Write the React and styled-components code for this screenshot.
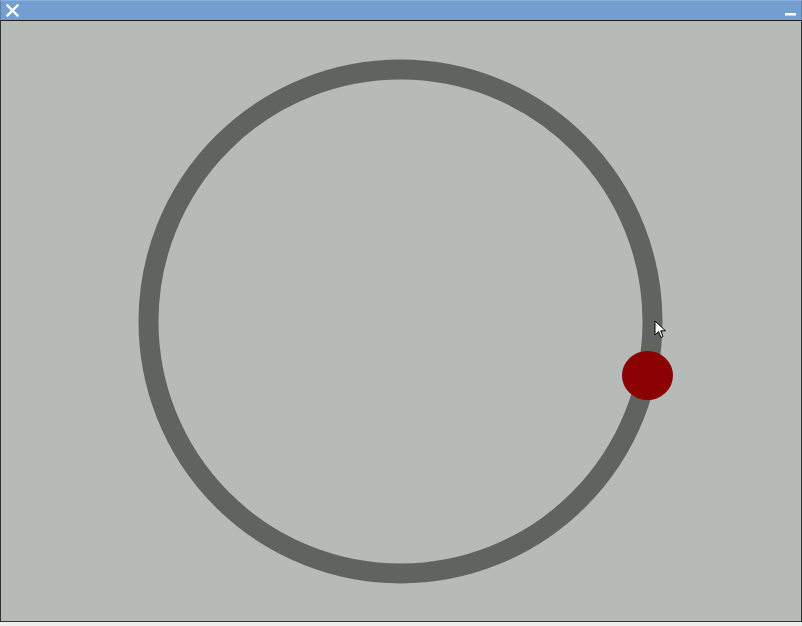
import React from "react";
import styled, { createGlobalStyle } from "styled-components";

const Global = createGlobalStyle`
  html, body { margin: 0; padding: 0; background: #eeeeec; overflow: hidden; }
  body { font-family: "DejaVu Sans", sans-serif; }
`;

const Window = styled.div`
  width: 802px;
  height: 626px;
  display: flex;
  flex-direction: column;
  background: #eeeeec;
`;

const TitleBar = styled.div`
  flex: none;
  background: #729fcf;
  border-top: 1px solid #8fb0d6;
  border-left: 1px solid #5f7fa8;
  border-right: 1px solid #5f7fa8;
  border-bottom: 1px solid #1c1c1c;
  box-sizing: border-box;
  height: 21px;
  display: flex;
  align-items: center;
  justify-content: space-between;
  padding: 0 4px 0 4px;
`;

const TitleButton = styled.button`
  border: 0;
  background: none;
  padding: 0;
  width: 14px;
  height: 14px;
  display: flex;
  align-items: center;
  justify-content: center;
`;

const Canvas = styled.div`
  position: relative;
  height: 600px;
  flex: none;
  background: #b7bbb7;
  border-left: 1px solid #2e3436;
  border-right: 1px solid #2e3436;
  border-bottom: 1px solid #2e3436;
  box-sizing: content-box;
  width: 800px;
`;

const Scene = styled.svg`
  display: block;
`;

const Cursor = styled.svg`
  position: absolute;
  left: 653px;
  top: 299px;
`;

export default function App() {
  return (
    <>
      <Global />
      <Window>
        <TitleBar>
          <TitleButton aria-label="close">
            <svg width="13" height="13" viewBox="0 0 13 13">
              <path d="M1.5 1.5 L11.5 11.5 M11.5 1.5 L1.5 11.5" stroke="#ffffff" strokeWidth="2.4" strokeLinecap="square" />
            </svg>
          </TitleButton>
          <TitleButton aria-label="minimize">
            <svg width="13" height="13" viewBox="0 0 13 13">
              <rect x="1" y="9" width="11" height="2.5" fill="#ffffff" />
            </svg>
          </TitleButton>
        </TitleBar>
        <Canvas>
          <Scene width="800" height="600" viewBox="0 0 800 600">
            <circle cx="399.5" cy="300.5" r="252" fill="none" stroke="#5f645f" strokeWidth="20" />
            <ellipse cx="646.5" cy="354.5" rx="25.5" ry="24.5" fill="#8b0000" />
          </Scene>
          <Cursor width="14" height="20" viewBox="0 0 14 20">
            <path d="M1 1 L1 15 L4.5 11.5 L7 17.5 L9 16.5 L6.7 10.8 L11.5 10.8 Z" fill="#ffffff" stroke="#000000" strokeWidth="1" strokeLinejoin="miter" />
          </Cursor>
        </Canvas>
      </Window>
    </>
  );
}
